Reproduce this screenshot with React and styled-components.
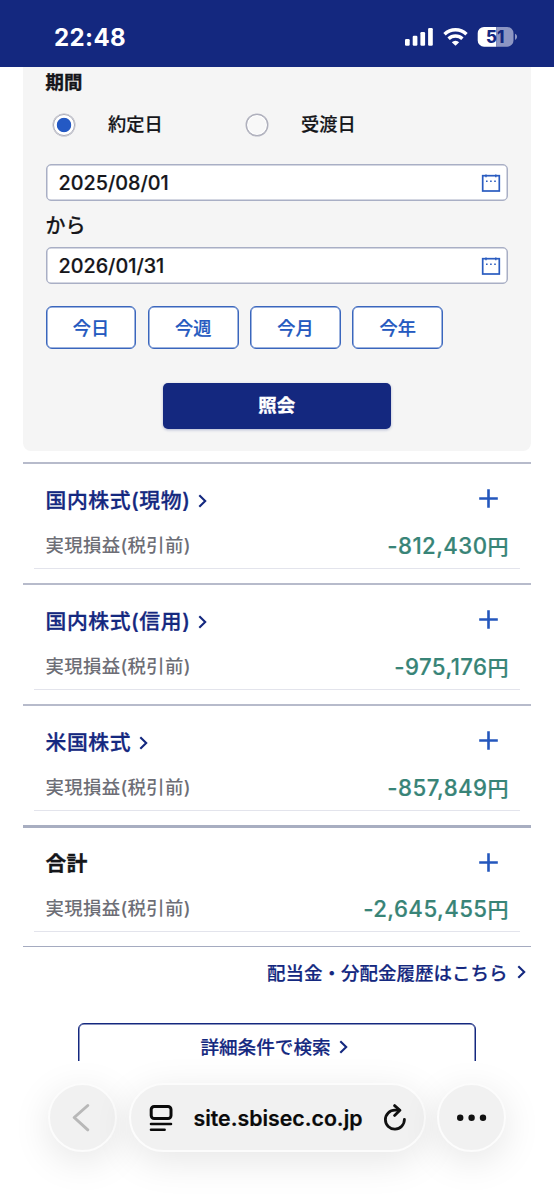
import styled, { createGlobalStyle } from "styled-components";

const groups = [
  { title: "国内株式(現物)", amount: "-812,430", link: true },
  { title: "国内株式(信用)", amount: "-975,176", link: true },
  { title: "米国株式", amount: "-857,849", link: true },
  { title: "合計", amount: "-2,645,455", total: true },
];

const CalendarIcon = () => (
  <svg width="20" height="20" viewBox="0 0 20 20" fill="none" stroke="#2a5cc0">
    <rect x="1.7" y="2.7" width="16.6" height="15.3" strokeWidth="1.7" />
    <path d="M5 1.4v2.8M14.8 1.4v2.8" strokeWidth="1.4" />
    <path d="M5 8.2h1.6M9.1 8.2h1.6M13.2 8.2h1.6" strokeWidth="1.6" />
  </svg>
);

const Chevron = () => (
  <svg width="9" height="14" viewBox="0 0 9 14" fill="none">
    <path d="M1.3 1.2L7.2 7L1.3 12.8" stroke="#14287f" strokeWidth="2.1" />
  </svg>
);

const StatusIcons = () => (
  <svg width="114" height="22" viewBox="404 26 114 22" fill="#fff">
    <rect x="405" y="39" width="4.7" height="6.8" rx="1.2" />
    <rect x="412.7" y="35.7" width="4.7" height="10.1" rx="1.2" />
    <rect x="420.4" y="32" width="4.7" height="13.8" rx="1.2" />
    <rect x="428.1" y="28" width="4.7" height="17.8" rx="1.2" />
    <g fill="none" stroke="#fff" strokeWidth="3.4">
      <path d="M444.5 34.2a15.8 15.8 0 0 1 22 0" />
      <path d="M448.6 38.8a9.9 9.9 0 0 1 13.8 0" />
    </g>
    <path d="M455.5 45.8l-3.7-3.5a5.2 5.2 0 0 1 7.4 0z" />
    <path d="M484 27h12.3v19.7H484a6.3 6.3 0 0 1-6.3-6.3v-7.1a6.3 6.3 0 0 1 6.3-6.3z" />
    <path
      d="M496.3 27h10.9a6.3 6.3 0 0 1 6.3 6.3v7.1a6.3 6.3 0 0 1-6.3 6.3h-10.9z"
      fill="#8d96c3"
    />
    <path d="M515 33.8c2.8 1.1 2.8 5 0 6.1z" fill="#8d96c3" />
    <text
      x="495.3"
      y="42.9"
      textAnchor="middle"
      fill="#14287f"
      fontFamily="Inter, sans-serif"
      fontSize="16.8"
      fontWeight="800"
    >
      51
    </text>
  </svg>
);

const App = () => {
  return (
    <Page>
      <GlobalStyle />
      <StatusBar>
        <Clock>22:48</Clock>
        <StatusIcons />
      </StatusBar>
      <Content>
        <Panel>
          <PanelTitle>期間</PanelTitle>
          <Radios>
            <RadioLabel>
              <Radio $checked />
              <RadioText>約定日</RadioText>
            </RadioLabel>
            <RadioLabel>
              <Radio />
              <RadioText>受渡日</RadioText>
            </RadioLabel>
          </Radios>
          <DateField>
            2025/08/01
            <CalendarIcon />
          </DateField>
          <From>から</From>
          <DateField>
            2026/01/31
            <CalendarIcon />
          </DateField>
          <Ranges>
            <RangeButton>今日</RangeButton>
            <RangeButton>今週</RangeButton>
            <RangeButton>今月</RangeButton>
            <RangeButton>今年</RangeButton>
          </Ranges>
          <Submit>照会</Submit>
        </Panel>
        <Groups>
          {groups.map((group) => (
            <Group key={group.title} $total={group.total}>
              <GroupHead $total={group.total}>
                <GroupTitle $total={group.total}>
                  {group.title}
                  {group.link && <Chevron />}
                </GroupTitle>
                <svg width="19" height="19" viewBox="0 0 19 19">
                  <path d="M0.2 9.5h18.6M9.5 0.2v18.6" stroke="#2457bd" strokeWidth="2.6" />
                </svg>
              </GroupHead>
              <GroupRow>
                <Label>実現損益(税引前)</Label>
                <Amount>
                  {group.amount}
                  <Yen>円</Yen>
                </Amount>
              </GroupRow>
            </Group>
          ))}
        </Groups>
        <History>
          配当金・分配金履歴はこちら
          <Chevron />
        </History>
        <Detail>
          詳細条件で検索
          <Chevron />
        </Detail>
      </Content>
      <Toolbar>
        <Round>
          <svg width="68" height="68" viewBox="0 0 68 68" fill="none">
            <path
              d="M38.8 21.5L25.2 33.5L38.8 45.8"
              stroke="#b8b8b8"
              strokeWidth="3"
              strokeLinecap="round"
              strokeLinejoin="round"
            />
          </svg>
        </Round>
        <AddressBar>
          <svg width="24" height="28" viewBox="0 0 24 28" fill="none" stroke="#0a0a0a" strokeWidth="3">
            <rect x="2.2" y="2.4" width="19.8" height="12.2" rx="3" />
            <path d="M2 20h20M2 25.8h13.6" strokeWidth="2.6" strokeLinecap="round" />
          </svg>
          <Url>site.sbisec.co.jp</Url>
          <svg
            width="24"
            height="28"
            viewBox="0 0 24 28"
            fill="none"
            stroke="#111"
            strokeWidth="2.8"
            strokeLinecap="round"
            strokeLinejoin="round"
          >
            <path d="M21.4 15.4a9.5 9.5 0 1 1-9.5-9.3h4.3" />
            <path d="M11.6 1.6L16.9 6.3L11.6 11.4" />
          </svg>
        </AddressBar>
        <Round>
          <svg width="68" height="68" viewBox="0 0 68 68" fill="#111">
            <circle cx="22.2" cy="33.8" r="3.2" />
            <circle cx="33.6" cy="33.8" r="3.2" />
            <circle cx="45" cy="33.8" r="3.2" />
          </svg>
        </Round>
      </Toolbar>
    </Page>
  );
};

const GlobalStyle = createGlobalStyle`
  * {
    box-sizing: border-box;
  }

  body {
    margin: 0;
    background-color: white;
  }

  svg {
    flex-shrink: 0;
    display: block;
  }
`;

const Page = styled.div`
  width: 554px;
  height: 1200px;
  display: flex;
  flex-direction: column;
  overflow: hidden;
  background-color: #fff;
  color: #15161a;
  font-family: Inter, "Noto Sans CJK JP", sans-serif;
  font-weight: 500;
`;

const StatusBar = styled.div`
  height: 67px;
  flex-shrink: 0;
  display: flex;
  align-items: center;
  justify-content: space-between;
  padding: 7px 36px 0 54px;
  background-color: #14287f;
`;

const Clock = styled.span`
  color: white;
  font-size: 24px;
  font-weight: 700;
  letter-spacing: 0.4px;
`;

const Content = styled.div`
  height: 994px;
  flex-shrink: 0;
  overflow: hidden;
  padding: 0 23px;
`;

const Panel = styled.div`
  height: 384px;
  display: flex;
  flex-direction: column;
  padding: 0 23px 0 22.5px;
  border-radius: 0 0 8px 8px;
  background-color: #f5f5f5;
`;

const PanelTitle = styled.div`
  height: 28px;
  line-height: 28px;
  font-family: "Noto Sans CJK JP", sans-serif;
  font-size: 18.4px;
  font-weight: 700;
  -webkit-text-stroke: 0.4px;
`;

const Radios = styled.div`
  display: flex;
  height: 60px;
  padding-left: 7.5px;
`;

const RadioLabel = styled.label`
  width: 193px;
  height: 60px;
  display: flex;
  align-items: center;
  gap: 33px;
`;

const RadioText = styled.span`
  padding-bottom: 5px;
  font-family: "Noto Sans CJK JP", sans-serif;
  font-size: 18.2px;
  -webkit-text-stroke: 0.2px;
`;

const Radio = styled.span`
  width: 22px;
  height: 22px;
  border: 1.5px solid #aaabb8;
  border-radius: 50%;
  background: ${(props) =>
    props.$checked ? "radial-gradient(circle, #2459c4 6.8px, white 7.6px)" : "#f8f8f8"};
  box-shadow: inset 0 0 0 1px white, 0 0 0 0.5px #b5b6c2;
`;

const DateField = styled.div`
  height: 37px;
  flex-shrink: 0;
  margin-top: 9px;
  display: flex;
  align-items: center;
  justify-content: space-between;
  padding: 0 6px 0 12px;
  border: 1px solid #a9afc5;
  border-radius: 5px;
  background-color: white;
  box-shadow: inset 0 0 0 0.5px #a9afc5;
  font-size: 19.8px;
  -webkit-text-stroke: 0.2px;
`;

const From = styled.div`
  height: 37px;
  line-height: 47px;
  font-family: "Noto Sans CJK JP", sans-serif;
  font-size: 20px;
  -webkit-text-stroke: 0.2px;
`;

const Ranges = styled.div`
  display: flex;
  gap: 11.5px;
  margin-top: 22px;
`;

const RangeButton = styled.button`
  width: 90.8px;
  height: 43px;
  padding: 0 0 2px;
  border: 1px solid #3a66bd;
  border-radius: 6px;
  background-color: white;
  box-shadow: inset 0 0 0 0.5px #3a66bd;
  color: #2459c0;
  font-family: "Noto Sans CJK JP", sans-serif;
  font-size: 18.2px;
  font-weight: 500;
  -webkit-text-stroke: 0.2px;
`;

const Submit = styled.button`
  width: 228px;
  height: 46px;
  margin: 34px auto 0;
  padding: 0 0 4px;
  border: none;
  border-radius: 5px;
  background-color: #14287f;
  box-shadow: 0 1px 3px rgba(20, 40, 127, 0.3);
  color: white;
  font-family: "Noto Sans CJK JP", sans-serif;
  font-size: 18.4px;
  font-weight: 700;
  -webkit-text-stroke: 0.4px;
`;

const Groups = styled.div`
  margin-top: 11px;
  border-bottom: 1.5px solid #a5abc0;
`;

const Group = styled.div`
  height: 121px;
  padding: 0 11px;
  border-top: ${(props) => (props.$total ? "3px solid #a8aec1" : "2px solid #b7bbcb")};
`;

const GroupHead = styled.div`
  height: ${(props) => (props.$total ? "68px" : "69px")};
  display: flex;
  align-items: center;
  justify-content: space-between;
  padding: 0 22px 0 11.5px;
`;

const GroupTitle = styled.div`
  display: flex;
  align-items: center;
  gap: 8px;
  padding-top: 4px;
  color: ${(props) => (props.$total ? "#15161a" : "#14287f")};
  font-family: Inter, "Noto Sans CJK JP", sans-serif;
  font-size: 20.8px;
  font-weight: ${(props) => (props.$total ? 700 : 500)};
  letter-spacing: ${(props) => (props.$total ? "0.1px" : "0.6px")};
  line-height: 30px;
  -webkit-text-stroke: 0.3px;
`;

const GroupRow = styled.div`
  height: 36px;
  display: flex;
  align-items: flex-start;
  justify-content: space-between;
  padding: 0 11.5px;
  border-bottom: 1px solid #e3e4ec;
`;

const Label = styled.span`
  line-height: 24px;
  color: #6d6e76;
  font-family: Inter, "Noto Sans CJK JP", sans-serif;
  font-size: 18.4px;
  letter-spacing: 0.35px;
`;

const Amount = styled.span`
  line-height: 25px;
  color: #388477;
  font-size: 22.2px;
  letter-spacing: 0.45px;
  -webkit-text-stroke: 0.2px;
`;

const Yen = styled.span`
  font-family: "Noto Sans CJK JP", sans-serif;
  font-size: 21px;
  letter-spacing: 0;
  line-height: 1;
`;

const History = styled.div`
  height: 50px;
  display: flex;
  align-items: center;
  justify-content: flex-end;
  gap: 9.5px;
  padding-right: 5px;
  color: #14287f;
  font-family: "Noto Sans CJK JP", sans-serif;
  font-size: 18.5px;
  -webkit-text-stroke: 0.2px;
`;

const Detail = styled.div`
  width: 398px;
  height: 60px;
  margin: 25.5px auto 0 55px;
  display: flex;
  align-items: flex-start;
  justify-content: center;
  gap: 8px;
  padding: 10.5px 6px 0 0;
  border: 1px solid #14287f;
  border-radius: 6px;
  box-shadow: inset 0 0 0 0.5px #14287f;
  color: #14287f;
  font-family: "Noto Sans CJK JP", sans-serif;
  font-size: 18.6px;
  line-height: 24px;
  -webkit-text-stroke: 0.2px;

  svg {
    margin-top: 6px;
  }
`;

const Toolbar = styled.div`
  position: relative;
  height: 139px;
  flex-shrink: 0;
  display: flex;
  gap: 11.5px;
  padding: 22px 48px 0;
`;

const Glass = styled.div`
  height: 69px;
  display: flex;
  align-items: center;
  border: 2px solid #fcfcfc;
  border-radius: 35px;
  background-color: #f1f1f1;
  box-shadow: 0 9px 38px rgba(0, 0, 0, 0.1);
`;

const Round = styled(Glass)`
  width: 69px;
  flex-shrink: 0;
  justify-content: center;
`;

const AddressBar = styled(Glass)`
  flex: 1;
  justify-content: space-between;
  padding: 0 16.5px 0 18.5px;
`;

const Url = styled.span`
  color: #0a0a0a;
  font-size: 21.3px;
  font-weight: 600;
  -webkit-text-stroke: 0.2px;
`;

export default App;
